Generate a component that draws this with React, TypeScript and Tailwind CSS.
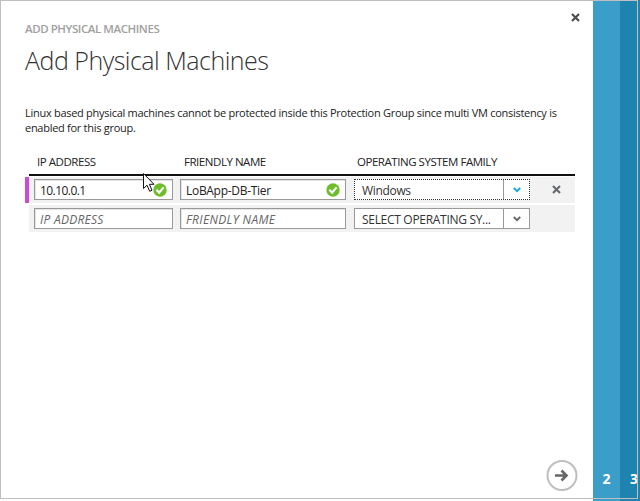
import type { ReactNode } from "react";

function Valid() {
  return (
    <svg width="14" height="14" viewBox="0 0 14 14" className="shrink-0">
      <circle cx="7" cy="7" r="6.7" fill="#6ebd2a" />
      <path d="M3.4 6.8 L6.1 9.6 L10.6 4.4" fill="none" stroke="#fff" strokeWidth="2.1" />
    </svg>
  );
}

function Chevron({ color }: { color: string }) {
  return (
    <svg width="8" height="6" viewBox="0 0 8 6">
      <path d="M0.8 1 L4 4.2 L7.2 1" fill="none" stroke={color} strokeWidth="1.9" />
    </svg>
  );
}

function Field({ className, children, valid }: { className: string; children: ReactNode; valid?: boolean }) {
  return (
    <div className={`flex h-[21px] items-center justify-between border border-[#999] bg-white pr-[5px] pl-[5px] text-[12px] shadow-[inset_1px_1px_0_#e4e4e4] ${className}`}>
      {children}
      {valid && <Valid />}
    </div>
  );
}

function Select({ children, active }: { children: ReactNode; active?: boolean }) {
  return (
    <div className={`ml-[8px] flex h-[21px] w-[176px] border bg-white text-[12px] ${active ? "border-dotted border-[#333]" : "border-[#999]"}`}>
      <div className="flex w-[149px] items-center border-r border-[#999] pl-[7px] text-[#333]">{children}</div>
      <div className="flex flex-1 items-center justify-center">
        <Chevron color={active ? "#12a9e8" : "#666"} />
      </div>
    </div>
  );
}

export default function App() {
  return (
    <div className="relative flex h-[501px] w-[640px] overflow-hidden bg-white font-['Open_Sans','Noto_Sans',sans-serif] text-[11px] text-[#222]">
      <main className="flex w-[593px] flex-col pl-[25px]">
        <div className="flex h-[46px] justify-between pr-[13px]">
          <div className="pt-[21px] text-[11.5px] leading-4 font-semibold tracking-[-0.43px] whitespace-nowrap text-[#a0a0a0]">ADD PHYSICAL MACHINES</div>
          <svg width="9" height="9" viewBox="0 0 9 9" className="mt-[13px]">
            <path d="M1 1 L8 8 M8 1 L1 8" stroke="#4d4d4d" strokeWidth="2.2" />
          </svg>
        </div>
        <h1 className="h-[59px] text-[25px] leading-[29px] font-light tracking-[-0.5px] whitespace-nowrap text-[#333]">Add Physical Machines</h1>
        <p className="h-[48px] text-[11px] leading-[15px] tracking-[-0.28px] whitespace-nowrap">
          Linux based physical machines cannot be protected inside this Protection Group since multi VM consistency is
          <br />
          enabled for this group.
        </p>
        <div className="ml-1 flex h-[23px] w-[546px] border-b-2 border-[#111] pl-2 text-[11.5px] leading-[17px] tracking-[-0.46px] whitespace-nowrap">
          <div className="w-[147px]">IP ADDRESS</div>
          <div className="w-[173px]">FRIENDLY NAME</div>
          <div>OPERATING SYSTEM FAMILY</div>
        </div>
        <div className="mt-px flex h-[26px] w-[550px] items-center bg-[#f2f2f2] pb-px">
          <div className="-mb-px h-[26px] w-1 bg-[#c94bd8]" />
          <Field className="ml-[5px] w-[139px]" valid><span className="pt-[2px] tracking-[-0.55px]">10.10.0.1</span></Field>
          <Field className="ml-[7px] w-[166px]" valid><span className="pt-[2px] tracking-[-0.3px]">LoBApp-DB-Tier</span></Field>
          <Select active><span className="pt-[2px] tracking-[-0.33px]">Windows</span></Select>
          <svg width="9" height="9" viewBox="0 0 9 9" className="ml-[22px]">
            <path d="M1 1 L8 8 M8 1 L1 8" stroke="#63666e" strokeWidth="2" />
          </svg>
        </div>
        <div className="mt-[2px] ml-1 flex h-[27px] w-[546px] items-center bg-[#f2f2f2]">
          <Field className="ml-[5px] w-[139px]"><span className="pt-[2px] tracking-[0.25px] text-[#666] italic">IP ADDRESS</span></Field>
          <Field className="ml-[7px] w-[166px]"><span className="pt-[2px] tracking-[0.35px] text-[#666] italic">FRIENDLY NAME</span></Field>
          <Select><span className="pt-[2px] tracking-[-0.3px]">SELECT OPERATING SY...</span></Select>
        </div>
        <div className="mt-auto mb-[9px] ml-[521px]">
          <svg width="32" height="32" viewBox="0 0 32 32">
            <circle cx="16" cy="15.5" r="14.5" fill="#fff" stroke="#bfbfbf" strokeWidth="2" />
            <path d="M9 15.5 H21 M15.5 10.5 L20.5 15.5 L15.5 20.5" fill="none" stroke="#666" strokeWidth="2.6" />
          </svg>
        </div>
      </main>
      <aside className="flex w-[27px] items-end justify-center bg-[#3b9ec9] pb-[12px] text-[14px] leading-5 font-bold text-white">2</aside>
      <aside className="flex w-[20px] items-end bg-[#1f83b0] pb-[12px] pl-[10px] text-[14px] leading-5 font-bold text-white">
        <span className="w-[7px] overflow-hidden">3</span>
      </aside>
      <div className="pointer-events-none absolute top-0 left-0 h-[499px] w-[638px] border border-[#bfbfbf]" />
      <svg className="absolute top-[172px] left-[142px]" width="13" height="21" viewBox="0 0 13 21">
        <path d="M1.5 1.5 V16.5 L5 13.2 L7.7 19.3 L10 18.3 L7.4 12.3 H12 Z" fill="#fff" stroke="#111" strokeWidth="1" />
      </svg>
    </div>
  );
}
